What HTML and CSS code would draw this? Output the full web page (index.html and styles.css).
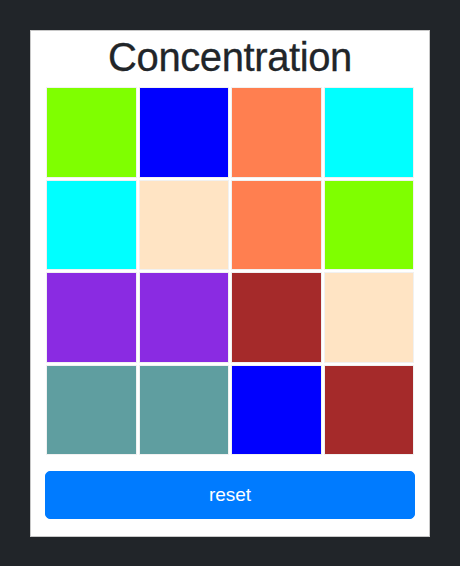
FILE: index.html
```html
<!DOCTYPE html>
<html>
<head>
<meta charset="utf-8">
<link rel="stylesheet" href="styles.css">
</head>
<body>
<div class="card">
  <h1 class="title">Concentration</h1>
  <div class="board">
    <div class="tile chartreuse"></div>
    <div class="tile blue"></div>
    <div class="tile coral"></div>
    <div class="tile cyan"></div>
    <div class="tile cyan"></div>
    <div class="tile bisque"></div>
    <div class="tile coral"></div>
    <div class="tile chartreuse"></div>
    <div class="tile violet"></div>
    <div class="tile violet"></div>
    <div class="tile brown"></div>
    <div class="tile bisque"></div>
    <div class="tile cadet"></div>
    <div class="tile cadet"></div>
    <div class="tile blue"></div>
    <div class="tile brown"></div>
  </div>
  <button class="reset">reset</button>
</div>
</body>
</html>
```

FILE: styles.css
```css
html, body {
  margin: 0;
  background: #212529;
}
body {
  padding: 30px;
  font-family: "Liberation Sans", Arial, sans-serif;
}
.card {
  box-sizing: border-box;
  width: 400px;
  background: #fff;
  border: 1px solid #c8c8c8;
  padding: 0 14px 17px;
}
.title {
  margin: 0 0 5px;
  padding-top: 2px;
  font-size: 40px;
  font-weight: 400;
  line-height: 48px;
  letter-spacing: -0.4px;
  text-align: center;
  color: #212529;
  -webkit-text-stroke: 0.3px #212529;
}
.board {
  display: grid;
  grid-template-columns: repeat(4, 1fr);
}
.tile {
  margin: 1px;
  border: 1px solid #f1f1f1;
  aspect-ratio: 1 / 1;
}
.chartreuse { background: #7fff00; }
.blue { background: #0000ff; }
.coral { background: #ff7f50; }
.cyan { background: #00ffff; }
.bisque { background: #ffe4c4; }
.violet { background: #8a2be2; }
.brown { background: #a52a2a; }
.cadet { background: #5f9ea0; }
.reset {
  display: block;
  width: 100%;
  margin-top: 15px;
  height: 48px;
  border: 1px solid #007bff;
  border-radius: 5px;
  background: #007bff;
  color: #fff;
  font-family: "Liberation Sans", Arial, sans-serif;
  font-size: 19px;
}
```
